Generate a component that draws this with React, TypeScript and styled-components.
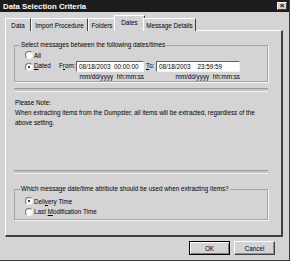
import React from "react";
import styled, { createGlobalStyle } from "styled-components";

const GlobalStyle = createGlobalStyle`
  body {
    margin: 0;
    background: #d4d4d4;
    font-family: "Liberation Sans", Tahoma, Arial, sans-serif;
  }
`;

const Window = styled.div`
  width: 290px;
  height: 261px;
  box-sizing: border-box;
  background: #d4d4d4;
  border-right: 1px solid #3a3a3a;
  border-bottom: 1px solid #3a3a3a;
  display: flex;
  flex-direction: column;
  font-size: 6.3px;
  color: #000;
`;

const TitleBar = styled.div`
  height: 12px;
  background: #1c1c1c;
  display: flex;
  align-items: center;
  justify-content: space-between;
  padding: 0 2px 0 3px;
`;

const TitleText = styled.span`
  color: #fff;
  font-weight: bold;
  font-size: 7.8px;
`;

const CloseBox = styled.div`
  width: 10px;
  height: 8px;
  box-sizing: border-box;
  background: #d4d4d4;
  border: 1px solid;
  border-color: #fff #404040 #404040 #fff;
  display: flex;
  align-items: center;
  justify-content: center;
  font-size: 8px;
  font-weight: bold;
  line-height: 1;
`;

const Body = styled.div`
  flex: 1;
  display: flex;
  flex-direction: column;
  padding: 3px 6px 0 5px;
`;

const TabStrip = styled.div`
  display: flex;
  align-items: flex-end;
  height: 16px;
  position: relative;
  z-index: 1;
  margin-bottom: -1px;
`;

const Tab = styled.div<{ $w: number; $active?: boolean }>`
  box-sizing: border-box;
  width: ${(p) => p.$w + (p.$active ? 4 : 0)}px;
  height: ${(p) => (p.$active ? 16 : 13)}px;
  margin: 0 ${(p) => (p.$active ? -2 : 0)}px;
  background: #d4d4d4;
  border-top: 1px solid #fff;
  border-left: 1px solid #fff;
  border-right: 1px solid #404040;
  border-top-left-radius: 1px;
  border-top-right-radius: 1px;
  display: flex;
  align-items: center;
  justify-content: center;
  white-space: nowrap;
  padding-bottom: ${(p) => (p.$active ? 2 : 0)}px;
`;

const Panel = styled.div`
  height: 207px;
  box-sizing: border-box;
  border-top: 1px solid #fff;
  border-left: 1px solid #fff;
  border-right: 2px solid #404040;
  border-bottom: 2px solid #404040;
  padding: 10px 13px 0 8px;
  display: flex;
  flex-direction: column;
`;

const Group = styled.fieldset<{ $top?: number }>`
  margin: ${(p) => p.$top ?? 0}px 0 0 0;
  padding: 0 0 2px 10px;
  border: 1px solid #a4a4a4;
  box-shadow: 1px 1px 0 #f4f4f4;
  min-width: 0;
`;

const Legend = styled.legend`
  padding: 0 1px;
  margin-left: -5px;
  line-height: 8px;
`;

const Row = styled.div<{ $h: number; $top?: number }>`
  display: flex;
  align-items: center;
  height: ${(p) => p.$h}px;
  margin-top: ${(p) => p.$top ?? 0}px;
`;

const DateRow = styled.div`
  display: flex;
  align-items: flex-start;
  height: 19px;
`;

const Radio = styled.span<{ $checked?: boolean; $top?: number }>`
  width: 6px;
  height: 6px;
  border-radius: 50%;
  background: #fff;
  border: 1px solid;
  border-color: #707070 #f0f0f0 #f0f0f0 #707070;
  display: inline-flex;
  align-items: center;
  justify-content: center;
  margin: ${(p) => p.$top ?? 0}px 1px 0 0;
  flex-shrink: 0;
  &::after {
    content: "";
    width: 2px;
    height: 2px;
    border-radius: 50%;
    background: ${(p) => (p.$checked ? "#000" : "transparent")};
  }
`;

const Label = styled.span<{ $width?: number; $top?: number; $left?: number }>`
  white-space: nowrap;
  width: ${(p) => (p.$width ? `${p.$width}px` : "auto")};
  margin-top: ${(p) => p.$top ?? 0}px;
  margin-left: ${(p) => p.$left ?? 0}px;
  flex-shrink: 0;
`;

const DateField = styled.div<{ $width: number }>`
  width: ${(p) => p.$width}px;
  display: flex;
  flex-direction: column;
  margin-top: 1px;
`;

const Input = styled.div`
  height: 11px;
  box-sizing: border-box;
  background: #fff;
  border: 1px solid;
  border-color: #606060 #f4f4f4 #f4f4f4 #606060;
  padding-left: 2px;
  display: flex;
  align-items: center;
  white-space: pre;
  overflow: hidden;
`;

const Hint = styled.div`
  text-align: right;
  white-space: pre;
  line-height: 7px;
  margin-top: 1px;
`;

const Separator = styled.div<{ $top: number }>`
  height: 2px;
  margin-top: ${(p) => p.$top}px;
  border-top: 1px solid #9c9c9c;
  border-bottom: 1px solid #f4f4f4;
  background: #c4c4c4;
`;

const Note = styled.div`
  margin-top: 6px;
  padding-left: 1px;
  line-height: 10px;
  height: 72px;
`;

const Footer = styled.div`
  display: flex;
  justify-content: flex-end;
  gap: 4px;
  padding: 4px 8px 0 0;
`;

const Button = styled.div<{ $default?: boolean }>`
  width: 41px;
  height: 14px;
  box-sizing: border-box;
  border: 1px solid;
  border-color: ${(p) => (p.$default ? "#000" : "#fff #404040 #404040 #fff")};
  box-shadow: ${(p) =>
    p.$default ? "inset 1px 1px #fff, inset -1px -1px #808080" : "inset -1px -1px #909090"};
  display: flex;
  align-items: center;
  justify-content: center;
`;

const App: React.FC = () => {
  return (
    <>
      <GlobalStyle />
      <Window>
        <TitleBar>
          <TitleText>Data Selection Criteria</TitleText>
          <CloseBox>×</CloseBox>
        </TitleBar>
        <Body>
          <TabStrip>
            <Tab $w={26}>Data</Tab>
            <Tab $w={57}>Import Procedure</Tab>
            <Tab $w={28}>Folders</Tab>
            <Tab $w={27} $active>
              Dates
            </Tab>
            <Tab $w={53}>Message Details</Tab>
          </TabStrip>
          <Panel>
            <Group>
              <Legend>Select messages between the following dates/times</Legend>
              <Row $h={10} $top={1}>
                <Radio />
                <Label>All</Label>
              </Row>
              <DateRow>
                <Radio $checked $top={3} />
                <Label $width={25} $top={2}>
                  <u>D</u>ated
                </Label>
                <Label $width={17} $top={2}>
                  F<u>r</u>om:
                </Label>
                <DateField $width={68}>
                  <Input>08/18/2003  00:00:00</Input>
                  <Hint>mm/dd/yyyy  hh:mm:ss</Hint>
                </DateField>
                <Label $width={10} $top={2} $left={2}>
                  <u>T</u>o:
                </Label>
                <DateField $width={84}>
                  <Input>08/18/2003    23:59:59</Input>
                  <Hint>mm/dd/yyyy  hh:mm:ss</Hint>
                </DateField>
              </DateRow>
            </Group>
            <Separator $top={6} />
            <Note>
              Please Note:
              <br />
              When extracting items from the Dumpster, all items will be extracted, regardless of the
              <br />
              above setting.
            </Note>
            <Separator $top={0} />
            <Group $top={11}>
              <Legend>Which message date/time attribute should be used when extracting items?</Legend>
              <Row $h={10} $top={3}>
                <Radio $checked />
                <Label>
                  Deli<u>v</u>ery Time
                </Label>
              </Row>
              <Row $h={11}>
                <Radio />
                <Label>
                  Last <u>M</u>odification Time
                </Label>
              </Row>
            </Group>
          </Panel>
          <Footer>
            <Button $default>OK</Button>
            <Button>Cancel</Button>
          </Footer>
        </Body>
      </Window>
    </>
  );
};

export default App;
